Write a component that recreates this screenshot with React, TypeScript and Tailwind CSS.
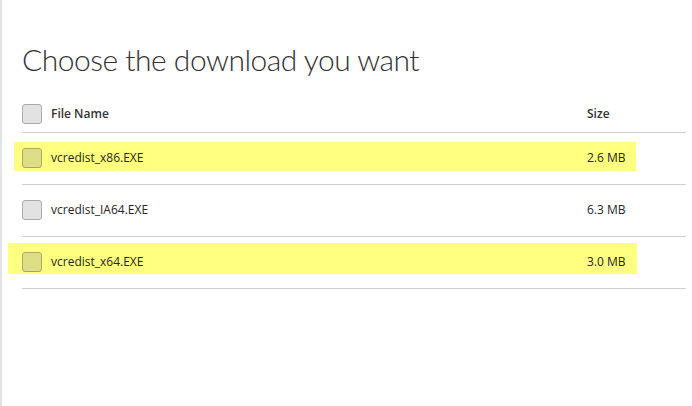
import React from 'react';

type FileRow = { name: string; size: string; mark?: string };

const files: FileRow[] = [
  { name: 'vcredist_x86.EXE', size: '2.6 MB', mark: 'left-[-8px] top-[9px] h-[29px] w-[622px]' },
  { name: 'vcredist_IA64.EXE', size: '6.3 MB' },
  { name: 'vcredist_x64.EXE', size: '3.0 MB', mark: 'left-[-14px] top-[6px] h-[31px] w-[629px]' },
];

const Box: React.FC<{ tint?: boolean }> = ({ tint }) => (
  <span
    className={
      'relative block h-[20px] w-[20px] shrink-0 rounded-[3px] border ' +
      (tint ? 'border-[#a8a86a] bg-[#dede86]' : 'border-[#ababab] bg-[#e2e2e2]')
    }
  />
);

const App: React.FC = () => {
  return (
    <div
      className="h-[406px] w-[692px] overflow-hidden border-l-2 border-[#e2e2e2] bg-white text-[#262626]"
      style={{ fontFamily: '"Open Sans", "Noto Sans", sans-serif' }}
    >
      <div className="ml-[20px] w-[664px]">
        <h1
          className="pt-[39px] text-[30px] font-light leading-[40px] tracking-[-0.5px] text-[#333]"
          style={{ fontFamily: 'Lato, "Open Sans", sans-serif' }}
        >
          Choose the download you want
        </h1>

        <div className="mt-[18px] flex h-[36px] items-center border-b border-[#cfcfcf] pb-[1px] text-[12px]">
          <Box />
          <span className="ml-[9px] w-[536px] font-semibold text-[#333]">File Name</span>
          <span className="font-semibold text-[#333]">Size</span>
        </div>

        {files.map((f) => (
          <div key={f.name} className="relative flex h-[52px] items-center border-b border-[#cfcfcf] pb-[2px] text-[12px]">
            {f.mark && <span className={'absolute bg-[#ffff80] ' + f.mark} />}
            <Box tint={!!f.mark} />
            <span className="relative ml-[9px] w-[536px]">{f.name}</span>
            <span className="relative">{f.size}</span>
          </div>
        ))}
      </div>
    </div>
  );
};

export default App;
